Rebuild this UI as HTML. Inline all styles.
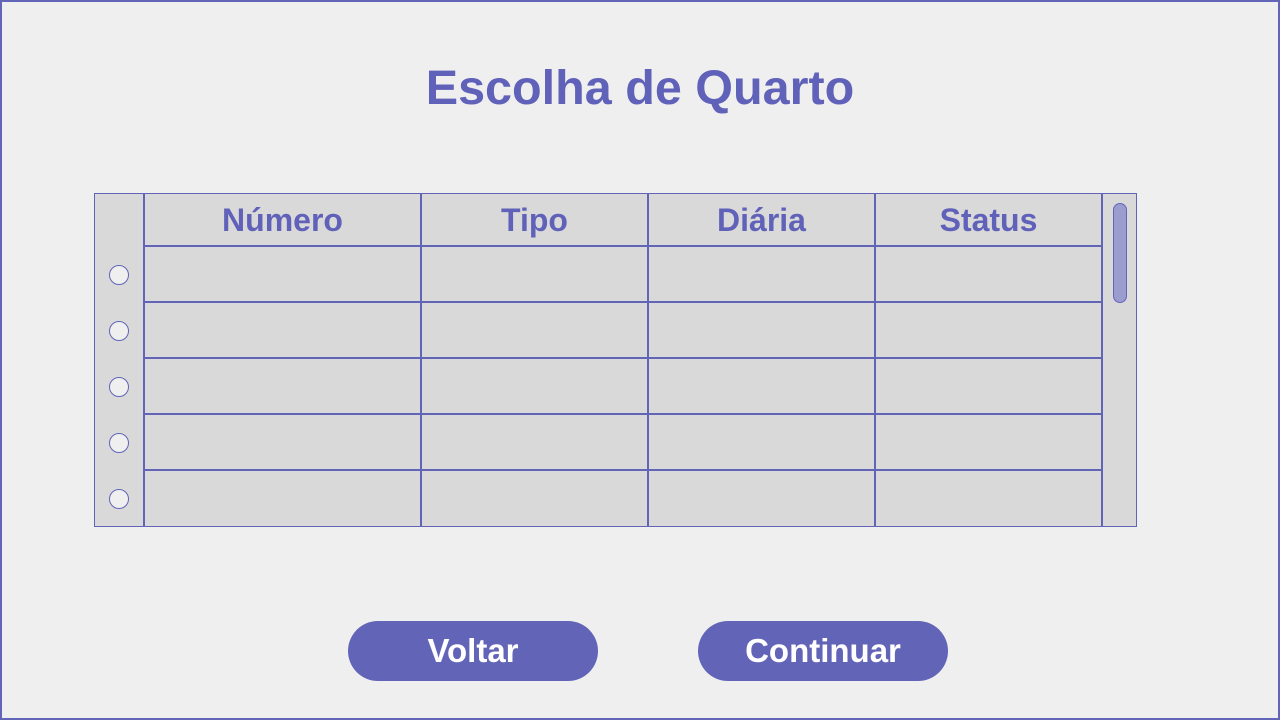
<!DOCTYPE html>
<html><head><style>
*{margin:0;padding:0;box-sizing:border-box}
body{width:1280px;height:720px;background:#efefef;position:relative;overflow:hidden;font-family:"Liberation Sans",sans-serif}
.frame{position:absolute;left:0;top:0;width:1280px;height:720px;border:2px solid #6264b8}
h1{position:absolute;left:0;width:1280px;top:60px;text-align:center;font-size:48.5px;font-weight:bold;color:#6061b9}
.tbl{position:absolute;left:94px;top:193px;width:1043px;height:334px;background:#d9d9d9;border:1px solid #6264b8}
.v{position:absolute;width:2px;background:#6264b8;top:0;height:334px}
.h{position:absolute;height:2px;background:#6264b8;left:144px;width:958px}
.th{position:absolute;top:0;height:53px;line-height:53px;text-align:center;font-size:32px;font-weight:bold;color:#6061b9}
.r{position:absolute;left:109px;width:20px;height:20px;border-radius:50%;background:#efefef;border:1px solid #6264b8}
.thumb{position:absolute;left:1113px;top:203px;width:14px;height:100px;border-radius:7px;background:#9c9dcf;border:1px solid #6264b8}
.btn{position:absolute;top:621px;width:250px;height:60px;border-radius:30px;background:#6264b8;color:#fff;font-size:33px;font-weight:bold;text-align:center;line-height:60px}
</style></head><body>
<div class="frame"></div>
<h1>Escolha de Quarto</h1>
<div class="tbl"></div>
<div class="v" style="left:143px;top:193px"></div>
<div class="v" style="left:420px;top:193px"></div>
<div class="v" style="left:647px;top:193px"></div>
<div class="v" style="left:874px;top:193px"></div>
<div class="v" style="left:1101px;top:193px"></div>
<div class="h" style="top:245px"></div>
<div class="h" style="top:301px"></div>
<div class="h" style="top:357px"></div>
<div class="h" style="top:413px"></div>
<div class="h" style="top:469px"></div>
<div class="th" style="left:144px;width:277px;top:194px">Número</div>
<div class="th" style="left:421px;width:227px;top:194px">Tipo</div>
<div class="th" style="left:648px;width:227px;top:194px">Diária</div>
<div class="th" style="left:875px;width:227px;top:194px">Status</div>
<div class="r" style="top:265px"></div>
<div class="r" style="top:321px"></div>
<div class="r" style="top:377px"></div>
<div class="r" style="top:433px"></div>
<div class="r" style="top:489px"></div>
<div class="thumb"></div>
<div class="btn" style="left:348px">Voltar</div>
<div class="btn" style="left:698px">Continuar</div>
</body></html>
